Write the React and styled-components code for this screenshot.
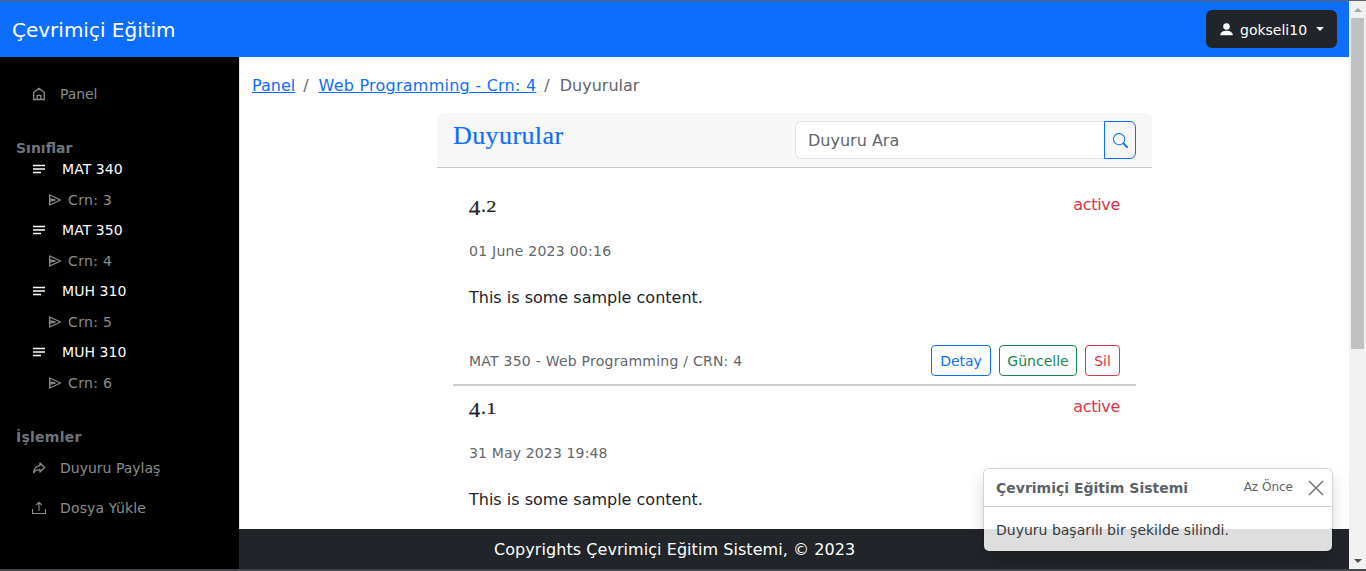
import React from "react";
import styled, { createGlobalStyle } from "styled-components";

const Global = createGlobalStyle`
  *{box-sizing:border-box}
  body{margin:0;overflow:hidden;background:#fff;color:#212529;font:16px/24px Verdana,"DejaVu Sans",sans-serif}
`;
const Page = styled.div`display:flex;flex-direction:column;height:571px;border-top:1px solid #5f6068;border-bottom:2px solid #45464c;overflow:hidden;`;
const Window = styled.div`display:flex;height:568px;`;
const View = styled.div`width:1349px;display:flex;flex-direction:column;`;
const Navbar = styled.header`height:56px;flex:none;background:#0d6efd;display:flex;align-items:center;justify-content:space-between;padding:0 12px;`;
const Text = styled.span`white-space:pre;letter-spacing:${p => p.$ls || 0}px;`;
const Brand = styled(Text)`color:#fff;font-size:20px;padding-top:1px;`;
const UserButton = styled.button`height:38px;width:131px;border:0;border-radius:6px;background:#212529;color:#fff;display:flex;align-items:center;padding:0 13px 0 13px;font:14px/21px Verdana,"DejaVu Sans",sans-serif;`;
const UserName = styled(Text)`margin-left:6px;flex:1;text-align:left;padding-top:2px;`;
const Caret = styled.i`border:4px solid transparent;border-top-color:#fff;border-bottom:0;`;
const Body = styled.div`display:flex;flex:1;min-height:0;`;
const Sidebar = styled.aside`width:239px;background:#000;color:#8c8c8c;display:flex;flex-direction:column;padding-top:25px;font-size:14px;`;
const SideRow = styled.div`height:${p => p.$h}px;display:flex;align-items:center;padding-left:${p => p.$pl}px;gap:${p => p.$gap}px;color:${p => p.$white ? "#fff" : "#8c8c8c"};svg{flex:none}`;
const SideTitle = styled.div`height:13px;line-height:13px;margin-top:${p => p.$mt}px;margin-bottom:${p => p.$mb || 0}px;padding-left:16px;color:#6c757d;font-weight:bold;letter-spacing:${p => p.$ls || 0}px;`;
const Main = styled.main`width:1110px;display:flex;flex-direction:column;border-left:1px solid #dee2e6;`;
const Content = styled.section`height:472px;overflow:hidden;`;
const Crumbs = styled.nav`height:56px;display:flex;align-items:center;padding:2px 0 0 12px;color:#5f666c;`;
const Link = styled.a`color:#0d6efd;text-decoration:underline;white-space:pre;letter-spacing:${p => p.$ls || 0}px;`;
const Slash = styled.span`padding:0 10px 0 8px;`;
const Card = styled.div`width:715px;margin-left:197px;`;
const CardHeader = styled.div`height:55px;background:#f7f7f7;border-bottom:1px solid #c8c9ca;border-radius:6px 6px 0 0;display:flex;justify-content:space-between;padding:8px 16px;`;
const Title = styled.h4`margin:0;font:26px/30px Georgia,"Liberation Serif",serif;color:#0d6efd;letter-spacing:.4px;-webkit-text-stroke:.2px #0d6efd;`;
const Search = styled.div`display:flex;width:341px;height:38px;`;
const Field = styled.div`flex:1;border:1px solid #dee2e6;border-right:0;border-radius:6px 0 0 6px;background:#fff;padding:7px 12px 5px;color:#5f666c;`;
const SearchButton = styled.button`width:32px;padding:0;border:1px solid #0d6efd;border-radius:0 6px 6px 0;background:transparent;color:#0d6efd;display:flex;align-items:center;justify-content:center;`;
const Item = styled.article`height:202px;margin:0 16px;padding:8px 16px 0;border-bottom:2px solid #cccfd2;`;
const Row = styled.div`height:${p => p.$h}px;display:flex;align-items:center;justify-content:space-between;padding-top:${p => p.$pt || 0}px;`;
const ItemTitle = styled.h5`margin:0;padding-top:2px;font:400 20px/22px Georgia,"Liberation Serif",serif;-webkit-text-stroke:.2px #212529;`;
const Digit = styled.span`font-size:${p => p.$low ? 22 : 17}px;line-height:1;vertical-align:${p => p.$low ? -3 : 0}px;display:inline-block;transform:scaleX(${p => p.$low ? 1.05 : 1.2});margin:0 1px;margin-left:${p => p.$low ? 0 : 1}px;`;
const Active = styled(Text)`color:#dc3545;`;
const Small = styled(Text)`font-size:14px;color:#5f666c;padding-top:${p => p.$pt || 0}px;`;
const Buttons = styled.div`display:flex;gap:8px;`;
const Button = styled.button`height:31px;width:${p => p.$w}px;padding:2px 0 0;border:1px solid ${p => p.$c};border-radius:4px;background:#fff;color:${p => p.$c};font:14px/21px Verdana,"DejaVu Sans",sans-serif;`;
const Footer = styled.footer`height:40px;margin-left:-1px;background:#212529;color:#fff;display:flex;align-items:center;padding:1px 0 0 255px;`;
const Scroll = styled.div`width:17px;background:#f1f1f1;display:flex;flex-direction:column;align-items:center;`;
const Arrow = styled.div`height:17px;display:flex;align-items:center;`;
const Thumb = styled.div`width:13px;height:331px;background:#c1c1c1;margin-bottom:auto;`;
const Toast = styled.div`position:absolute;left:983px;top:468px;width:350px;height:84px;border:1px solid rgba(0,0,0,.176);border-radius:6px;background:rgba(255,255,255,.85);box-shadow:0 8px 16px rgba(0,0,0,.15);background-clip:padding-box;font-size:14px;`;
const ToastHead = styled.div`height:38px;border-bottom:1px solid #ccc;border-radius:5px 5px 0 0;display:flex;align-items:center;padding:0 8px 0 12px;color:#5b6268;background:rgba(255,255,255,.85);`;
const ToastName = styled(Text)`font-weight:bold;margin-right:auto;`;
const Ago = styled(Text)`font-size:12px;margin-right:15px;padding-bottom:1px;`;
const ToastBody = styled.div`padding:13px 12px 11px;line-height:21px;color:#343a40;`;

const svg = { width: 16, height: 16, viewBox: "0 0 16 16", fill: "none", stroke: "currentColor", strokeWidth: 1.3 };
const Home = () => <svg {...svg}><path d="M2.7 6.6 8 2.3l5.3 4.3v6.9H2.7zM6.2 13.5V9.3h3.6v4.2" strokeLinejoin="round" /></svg>;
const Lines = () => <svg {...svg}><path d="M2 4.5h12M2 8h12M2 11.5h8" /></svg>;
const Send = () => <svg {...svg}><path d="M2.7 3v10L13.5 8zM3 6.9 8 8 3 9.1" strokeLinejoin="round" /></svg>;
const Share = () => <svg {...svg}><path d="M9 3 13.6 7.5 9 12V9.6c-3 0-5 .9-6.3 3.2C3 9 5 6 9 5.6z" strokeLinejoin="round" /></svg>;
const Upload = () => <svg {...svg} strokeWidth="1.1"><path d="M1.5 9v4.5h13V9M8 11V2.5M5.2 5.2 8 2.4l2.8 2.8" /></svg>;
const User = () => <svg {...svg} width="15" height="15" stroke="none" fill="currentColor"><circle cx="8" cy="4.8" r="3.5" /><path d="M1.3 14c0-6.2 13.4-6.2 13.4 0z" /></svg>;
const Magnifier = () => <svg {...svg} width="15" height="15" stroke="none" fill="currentColor"><path d="M11.742 10.344a6.5 6.5 0 1 0-1.397 1.398h-.001q.044.06.098.115l3.85 3.85a1 1 0 0 0 1.415-1.414l-3.85-3.85a1 1 0 0 0-.115-.1zM12 6.5a5.5 5.5 0 1 1-11 0 5.5 5.5 0 0 1 11 0" /></svg>;
const Close = () => <svg {...svg} strokeWidth="1.5" stroke="#777"><path d="m1 1 14 14M15 1 1 15" /></svg>;

const courses = [["MAT 340", 3], ["MAT 350", 4], ["MUH 310", 5], ["MUH 310", 6]];
const items = [
  { n: "2", date: "01 June 2023 00:16", ls: 0.26, course: "MAT 350 - Web Programming / CRN: 4" },
  { n: "1", date: "31 May 2023 19:48", ls: 0.15 },
];

export default function App() {
  return (
    <Page>
      <Global />
      <Window>
        <View>
          <Navbar>
            <Brand>Çevrimiçi Eğitim</Brand>
            <UserButton><User /><UserName>gokseli10</UserName><Caret /></UserButton>
          </Navbar>
          <Body>
            <Sidebar>
              <SideRow $h={24} $pl={31} $gap={13}><Home /><Text $ls={-0.1}>Panel</Text></SideRow>
              <SideTitle $mt={36} $mb={-1}>Sınıflar</SideTitle>
              {courses.map(([name, crn], i) => (
                <React.Fragment key={i}>
                  <SideRow $h={30} $pl={31} $gap={15} $white><Lines /><Text $ls={0.05}>{name}</Text></SideRow>
                  <SideRow $h={31} $pl={47} $gap={5}><Send /><Text $ls={0.35}>Crn: {crn}</Text></SideRow>
                </React.Fragment>
              ))}
              <SideTitle $mt={33} $mb={4} $ls={0.25}>İşlemler</SideTitle>
              <SideRow $h={40} $pl={31} $gap={13}><Share /><Text>Duyuru Paylaş</Text></SideRow>
              <SideRow $h={40} $pl={31} $gap={13}><Upload /><Text $ls={0.15}>Dosya Yükle</Text></SideRow>
            </Sidebar>
            <Main>
              <Content>
                <Crumbs><Link>Panel</Link><Slash>/</Slash><Link $ls={0.24}>Web Programming - Crn: 4</Link><Slash>/</Slash><Text>Duyurular</Text></Crumbs>
                <Card>
                  <CardHeader>
                    <Title>Duyurular</Title>
                    <Search><Field>Duyuru Ara</Field><SearchButton aria-label="Ara"><Magnifier /></SearchButton></Search>
                  </CardHeader>
                  <Row $h={16} />
                  {items.map(({ n, date, ls, course }) => (
                    <Item key={n}>
                      <Row $h={26}><ItemTitle><Digit $low>4</Digit>.<Digit>{n}</Digit></ItemTitle><Active $ls={-0.3}>active</Active></Row>
                      <Row $h={66}><Small $ls={ls}>{date}</Small></Row>
                      <Row $h={26} $pt={2}><Text>This is some sample content.</Text></Row>
                      {course && (
                        <Row $h={100}>
                          <Small $ls={0.24} $pt={2}>{course}</Small>
                          <Buttons><Button $c="#0d6efd" $w={60}>Detay</Button><Button $c="#198754" $w={78}>Güncelle</Button><Button $c="#dc3545" $w={35}>Sil</Button></Buttons>
                        </Row>
                      )}
                    </Item>
                  ))}
                </Card>
              </Content>
              <Footer><Text $ls={0.06}>Copyrights Çevrimiçi Eğitim Sistemi, © 2023</Text></Footer>
            </Main>
          </Body>
        </View>
        <Scroll>
          <Arrow><svg width="8" height="4"><path d="M0 4 4 0l4 4z" fill="#a3a3a3" /></svg></Arrow>
          <Thumb />
          <Arrow><svg width="8" height="4"><path d="M0 0h8L4 4z" fill="#505050" /></svg></Arrow>
        </Scroll>
      </Window>
      <Toast>
        <ToastHead><ToastName>Çevrimiçi Eğitim Sistemi</ToastName><Ago>Az Önce</Ago><Close /></ToastHead>
        <ToastBody><Text>Duyuru başarılı bir şekilde silindi.</Text></ToastBody>
      </Toast>
    </Page>
  );
}
